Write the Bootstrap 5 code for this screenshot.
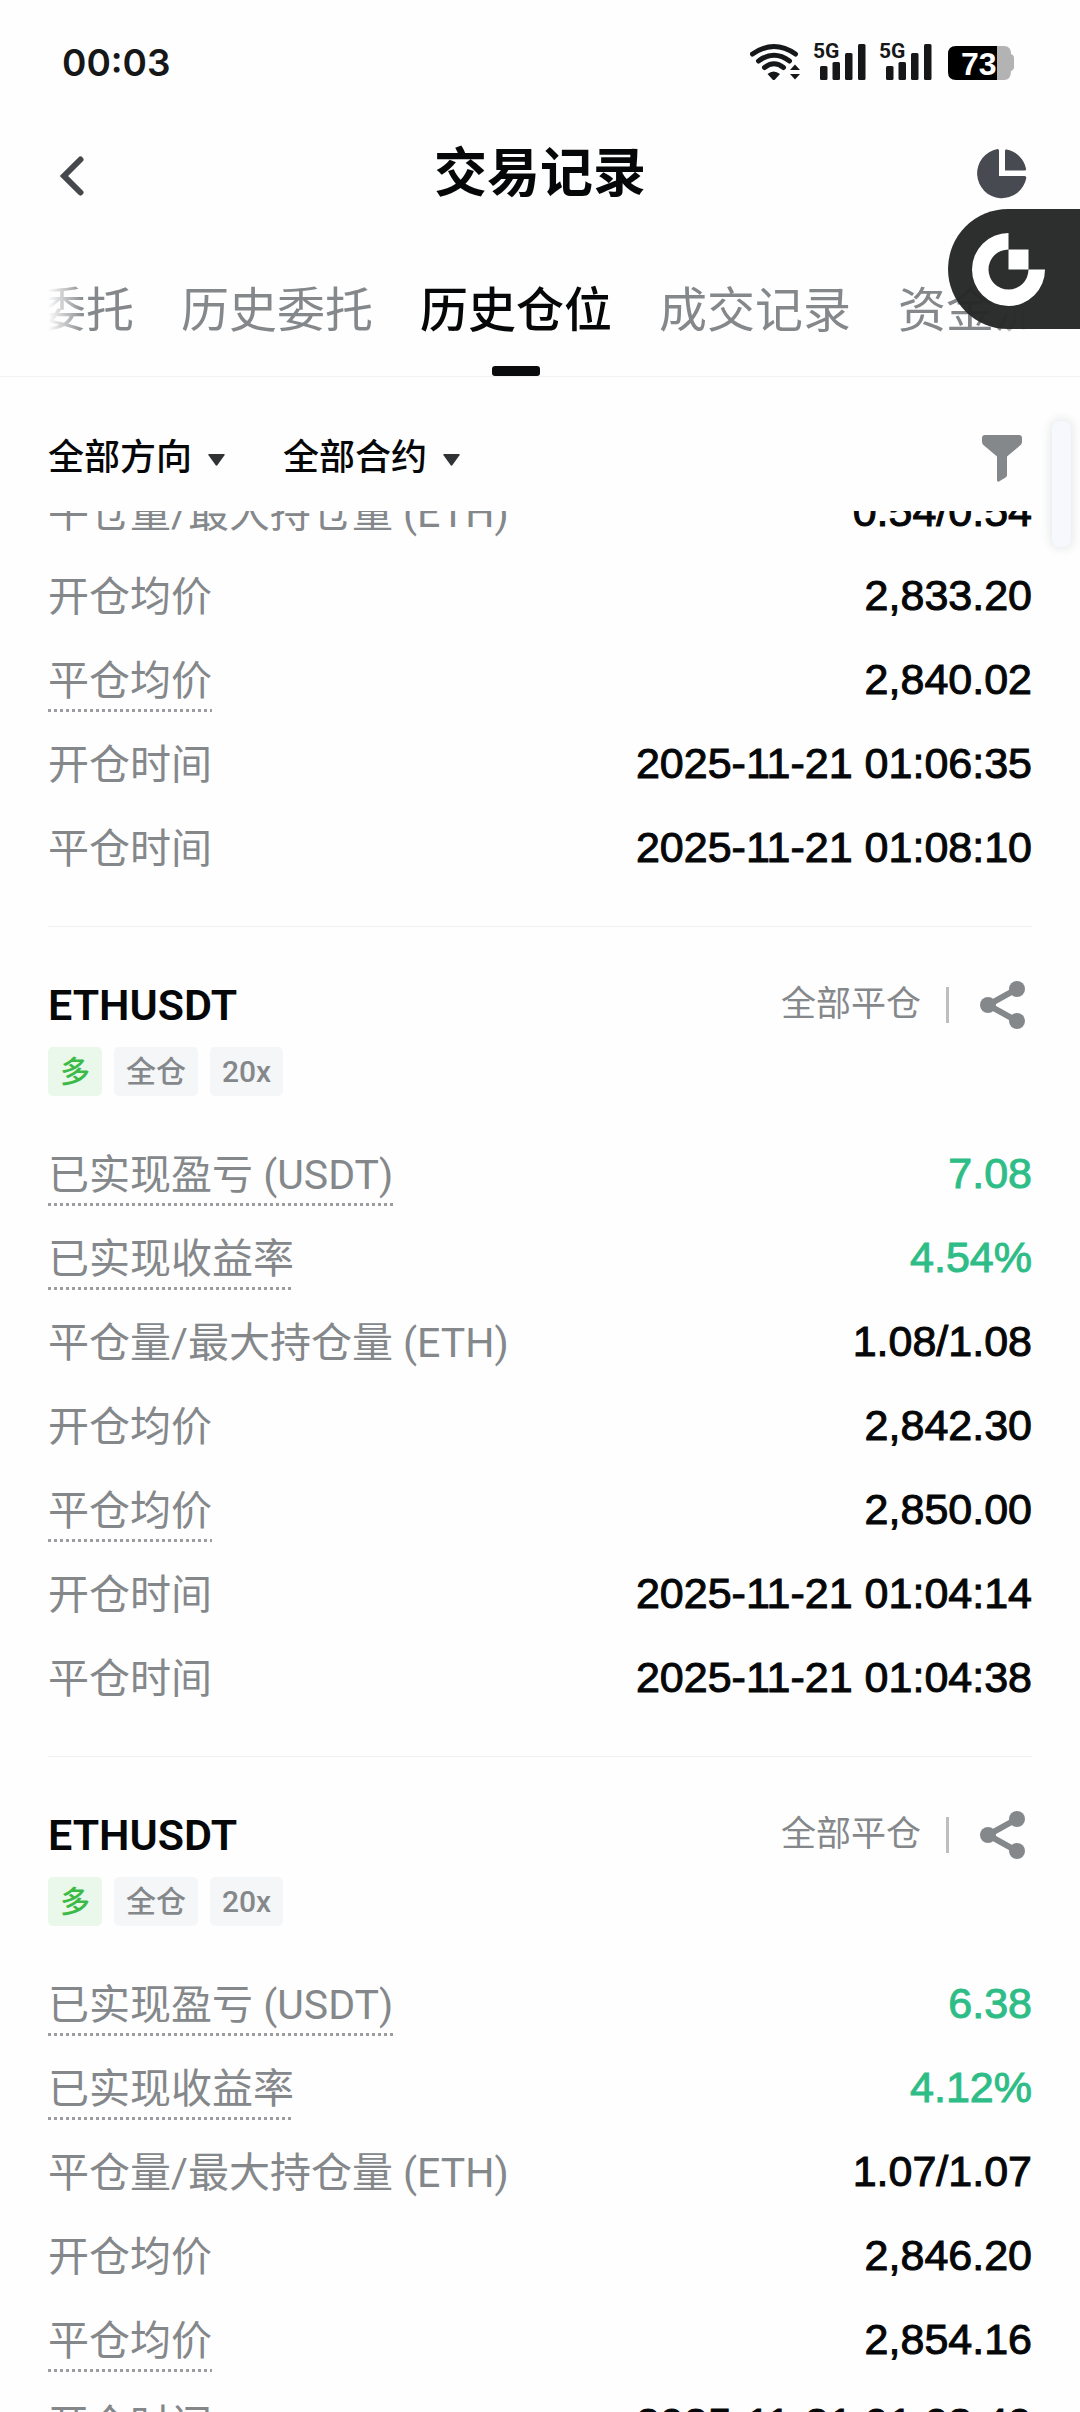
<!DOCTYPE html>
<html lang="zh-CN">
<head>
<meta charset="utf-8">
<meta name="viewport" content="width=device-width, initial-scale=1">
<title>交易记录</title>
<link href="https://cdn.jsdelivr.net/npm/bootstrap@5.3.0/dist/css/bootstrap.min.css" rel="stylesheet">
<style>
  :root { --muted: #85888b; --ink: #060708; --up: #2fbd87; }
  body { background: #fefefe; color: var(--ink); font-family: Roboto, "Noto Sans CJK SC", sans-serif; }
  .side { padding-left: 48px; padding-right: 48px; }
  .status-bar { height: 124px; padding-left: 62px; padding-right: 65px; color: #161718; }
  .clock { font: 600 37px/1 Inter, sans-serif; }
  .title-bar { height: 100px; padding-left: 60px; padding-right: 53px; }
  .title-bar h1 { font-size: 53px; line-height: 64px; font-weight: 700; }
  .plain { background: none; border: 0; padding: 0; line-height: 1; display: block; text-align: left; }
  .tab-line { height: 153px; border-bottom: 1px solid #f1f2f3; }
  .tab-strip { gap: 47px; height: 152px; overflow: hidden; flex-wrap: nowrap;
    -webkit-mask-image: linear-gradient(90deg, transparent, #000 36px, #000 calc(100% - 36px), transparent);
    mask-image: linear-gradient(90deg, transparent, #000 36px, #000 calc(100% - 36px), transparent); }
  .tab-strip li:first-child { margin-left: -10px; }
  .tab-strip a { display: block; height: 152px; font-size: 48px; line-height: 174px; white-space: nowrap; color: var(--muted); text-decoration: none; position: relative; }
  .tab-strip a.current { color: var(--ink); font-weight: 500; }
  .tab-strip a.current::after { content: ""; position: absolute; bottom: 0; left: 50%; margin-left: -24px; width: 48px; height: 10px; border-radius: 3px; background: #0a0b0c; }
  .filter-bar { height: 134px; padding-bottom: 26px; padding-top: 54px; padding-right: 56px; }
  .picker { width: auto; border: 0; border-radius: 0; padding: 0 32px 0 0; font-size: 36px; line-height: 52px; height: 52px; color: var(--ink); font-weight: 500;
    background: transparent url("data:image/svg+xml,%3Csvg xmlns='http://www.w3.org/2000/svg' viewBox='0 0 17 12'%3E%3Cpath d='M1 0h15q1 .4.5 1.3L9.500 11q-1 1.300-2 0L.5 1.300Q0 .4 1 0z' fill='%23303234'/%3E%3C/svg%3E") no-repeat right 22px / 17px 12px; }
  .pickers { gap: 58px; }
  .record-list { overflow: hidden; min-height: 0; }
  .scrolled { margin-top: -42px; }
  .entry { padding-bottom: 37px; border-bottom: 1px solid #eff0f1; }
  .line-item { height: 84px; }
  .line-item dt { font-size: 41px; line-height: 62px; font-weight: 400; color: var(--muted); white-space: nowrap; padding-top: 4px; }
  .line-item dt.hint { background: repeating-linear-gradient(90deg, #9b9da0 0 3px, transparent 3px 6px) left bottom / 100% 3px no-repeat; }
  .line-item dd { font: 400 43px/62px "Liberation Sans", Arial, sans-serif; white-space: nowrap; -webkit-text-stroke: 1px currentColor; }
  .gain { color: var(--up); }
  .entry-head { padding-top: 50px; }
  .pair { font-size: 43px; line-height: 56px; font-weight: 600; }
  .closed { font-size: 35px; line-height: 56px; color: var(--muted); }
  .split { width: 3px; height: 36px; background: #bcbec0; margin: 0 31px 0 25px; }
  .share { margin-right: 7px; }
  .tags { gap: 12px; padding: 14px 0 35px; }
  .chip { font-size: 30px; line-height: 49px; height: 49px; padding: 0 12px; border-radius: 5px; background: #f4f6f8; color: var(--muted); font-weight: 500; }
  .chip.long { background: #e9f8ea; color: #3cba48; }
  .float-tab { top: 209px; right: 0; width: 132px; height: 120px; border-radius: 60px 0 0 60px; background: rgba(38, 40, 40, .97); padding-left: 24px; z-index: 5; }
  .scroll-pill { top: 421px; right: 9px; width: 19px; height: 126px; border-radius: 8px; background: #f6f8fe; box-shadow: 0 0 10px 2px rgba(60, 70, 90, .12); z-index: 4; }
</style>
</head>
<body>
<div class="vh-100 d-flex flex-column overflow-hidden position-relative">

  <div class="status-bar d-flex align-items-center justify-content-between flex-shrink-0">
    <span class="clock">00:03</span>
    <svg width="265" height="56" viewBox="750 34 265 56" role="img" aria-label="5G 73%">
      <g fill="none" stroke="#161718" stroke-width="5" stroke-linecap="round">
        <path d="M752.500 54q21.500-15 43 0"/><path d="M758.500 61q15.500-11.500 31 0"/><path d="M764.500 67.500q9.500-7.500 19 0"/>
      </g>
      <path d="M767.500 74q6-5 12.500 0l-5 5.500q-1.200 1-2.500 0zM790 70l5-5.500 5 5.500zM790 74l5 5.500 5-5.500z" fill="#161718"/>
      <g fill="#161718" font-family="Roboto" font-weight="700" font-size="21">
        <text x="813" y="58">5G</text><text x="879" y="58">5G</text>
        <rect x="820" y="66" width="7.500" height="14" rx="1.500"/><rect x="832.500" y="62" width="7.500" height="18" rx="1.500"/><rect x="845" y="53" width="7.500" height="27" rx="1.500"/><rect x="858" y="44" width="7.500" height="36" rx="1.500"/>
        <rect x="886" y="66" width="7.500" height="14" rx="1.500"/><rect x="898.500" y="62" width="7.500" height="18" rx="1.500"/><rect x="911" y="53" width="7.500" height="27" rx="1.500"/><rect x="924" y="44" width="7.500" height="36" rx="1.500"/>
      </g>
      <path d="M997 46h7q7 0 7 8 3 1 3 4v9q0 3-3 4 0 9-7 9h-7z" fill="#b3b3b3"/>
      <path d="M956 46h41v34h-41q-8 0-8-8V54q0-8 8-8z" fill="#000"/>
      <text x="961" y="75" font-family="Liberation Sans" font-weight="700" font-size="32" fill="#fff">73</text>
    </svg>
  </div>

  <header class="title-bar d-flex align-items-center justify-content-between flex-shrink-0">
    <button class="plain" type="button" aria-label="返回">
      <svg class="mt-1" width="43" height="40" viewBox="0 0 43 40"><path d="M20.500 3.500L4 20l16.500 16.500" fill="none" stroke="#45484c" stroke-width="6" stroke-linecap="round"/></svg>
    </button>
    <h1 class="mb-0">交易记录</h1>
    <button class="plain" type="button" aria-label="统计">
      <svg width="50" height="50" viewBox="0 0 50 50" fill="#484a52"><path d="M20.500 0q1.500 0 1.500 1.500V27h25.500q2 0 1.800 2A24.800 24.800 0 1 1 20.500 0z"/><path d="M29.500.5q-1.500-.3-1.500 1.300V21.500h19.500q1.800 0 1.600-1.600A24.500 24.500 0 0 0 29.500.5z"/></svg>
    </button>
  </header>

  <nav class="tab-line side flex-shrink-0" aria-label="记录类型">
    <ul class="nav tab-strip">
      <li><a href="#">委托</a></li>
      <li><a href="#">历史委托</a></li>
      <li><a href="#" class="current" aria-current="page">历史仓位</a></li>
      <li><a href="#">成交记录</a></li>
      <li><a href="#">资金流水</a></li>
    </ul>
  </nav>

  <div class="filter-bar side d-flex align-items-center justify-content-between flex-shrink-0">
    <div class="pickers d-flex">
      <select class="form-select picker" aria-label="方向"><option>全部方向</option></select>
      <select class="form-select picker" aria-label="合约"><option>全部合约</option></select>
    </div>
    <button class="plain" type="button" aria-label="筛选">
      <svg width="42" height="48" viewBox="0 0 42 48"><path d="M3 1h34q3 0 3 3v4q0 2-2 3.500L25 22.500V41q0 1.500-1.500 2.500L17 47.500q-2 .5-2-1V22.500L2 11.500Q0 10 0 8V4q0-3 3-3z" fill="#85888b"/></svg>
    </button>
  </div>

  <main class="record-list side flex-grow-1">
    <section class="entry scrolled">
      <dl class="mb-0">
        <div class="line-item d-flex align-items-center justify-content-between"><dt>平仓量/最大持仓量 (ETH)</dt><dd class="mb-0">0.54/0.54</dd></div>
        <div class="line-item d-flex align-items-center justify-content-between"><dt>开仓均价</dt><dd class="mb-0">2,833.20</dd></div>
        <div class="line-item d-flex align-items-center justify-content-between"><dt class="hint">平仓均价</dt><dd class="mb-0">2,840.02</dd></div>
        <div class="line-item d-flex align-items-center justify-content-between"><dt>开仓时间</dt><dd class="mb-0">2025-11-21 01:06:35</dd></div>
        <div class="line-item d-flex align-items-center justify-content-between"><dt>平仓时间</dt><dd class="mb-0">2025-11-21 01:08:10</dd></div>
      </dl>
    </section>

    <section class="entry">
      <div class="entry-head d-flex align-items-center">
        <h2 class="pair mb-0 me-auto">ETHUSDT</h2>
        <span class="closed">全部平仓</span><span class="split"></span>
        <button class="plain share" type="button" aria-label="分享"><svg width="45" height="48" viewBox="0 0 45 48" fill="#85888b"><path d="M37 8L8 24l29 16" fill="none" stroke="#85888b" stroke-width="6"/><circle cx="37" cy="8" r="8"/><circle cx="8" cy="24" r="8"/><circle cx="37" cy="40" r="8"/></svg></button>
      </div>
      <div class="tags d-flex"><span class="chip long">多</span><span class="chip">全仓</span><span class="chip">20x</span></div>
      <dl class="mb-0">
        <div class="line-item d-flex align-items-center justify-content-between"><dt class="hint">已实现盈亏 (USDT)</dt><dd class="mb-0 gain">7.08</dd></div>
        <div class="line-item d-flex align-items-center justify-content-between"><dt class="hint">已实现收益率</dt><dd class="mb-0 gain">4.54%</dd></div>
        <div class="line-item d-flex align-items-center justify-content-between"><dt>平仓量/最大持仓量 (ETH)</dt><dd class="mb-0">1.08/1.08</dd></div>
        <div class="line-item d-flex align-items-center justify-content-between"><dt>开仓均价</dt><dd class="mb-0">2,842.30</dd></div>
        <div class="line-item d-flex align-items-center justify-content-between"><dt class="hint">平仓均价</dt><dd class="mb-0">2,850.00</dd></div>
        <div class="line-item d-flex align-items-center justify-content-between"><dt>开仓时间</dt><dd class="mb-0">2025-11-21 01:04:14</dd></div>
        <div class="line-item d-flex align-items-center justify-content-between"><dt>平仓时间</dt><dd class="mb-0">2025-11-21 01:04:38</dd></div>
      </dl>
    </section>

    <section class="entry">
      <div class="entry-head d-flex align-items-center">
        <h2 class="pair mb-0 me-auto">ETHUSDT</h2>
        <span class="closed">全部平仓</span><span class="split"></span>
        <button class="plain share" type="button" aria-label="分享"><svg width="45" height="48" viewBox="0 0 45 48" fill="#85888b"><path d="M37 8L8 24l29 16" fill="none" stroke="#85888b" stroke-width="6"/><circle cx="37" cy="8" r="8"/><circle cx="8" cy="24" r="8"/><circle cx="37" cy="40" r="8"/></svg></button>
      </div>
      <div class="tags d-flex"><span class="chip long">多</span><span class="chip">全仓</span><span class="chip">20x</span></div>
      <dl class="mb-0">
        <div class="line-item d-flex align-items-center justify-content-between"><dt class="hint">已实现盈亏 (USDT)</dt><dd class="mb-0 gain">6.38</dd></div>
        <div class="line-item d-flex align-items-center justify-content-between"><dt class="hint">已实现收益率</dt><dd class="mb-0 gain">4.12%</dd></div>
        <div class="line-item d-flex align-items-center justify-content-between"><dt>平仓量/最大持仓量 (ETH)</dt><dd class="mb-0">1.07/1.07</dd></div>
        <div class="line-item d-flex align-items-center justify-content-between"><dt>开仓均价</dt><dd class="mb-0">2,846.20</dd></div>
        <div class="line-item d-flex align-items-center justify-content-between"><dt class="hint">平仓均价</dt><dd class="mb-0">2,854.16</dd></div>
        <div class="line-item d-flex align-items-center justify-content-between"><dt>开仓时间</dt><dd class="mb-0">2025-11-21 01:03:49</dd></div>
      </dl>
    </section>
  </main>

  <button class="float-tab plain position-absolute" type="button" aria-label="快捷入口">
    <svg width="73" height="73" viewBox="-36.500 -36.500 73 73" fill="#fff"><path d="M0-36.500A36.500 36.500 0 1 0 36.500 0H20A20 20 0 1 1 0-20z"/><path d="M0-20h20V0H0z"/></svg>
  </button>
  <div class="scroll-pill position-absolute"></div>
</div>
<script src="https://cdn.jsdelivr.net/npm/bootstrap@5.3.0/dist/js/bootstrap.bundle.min.js"></script>
</body>
</html>
